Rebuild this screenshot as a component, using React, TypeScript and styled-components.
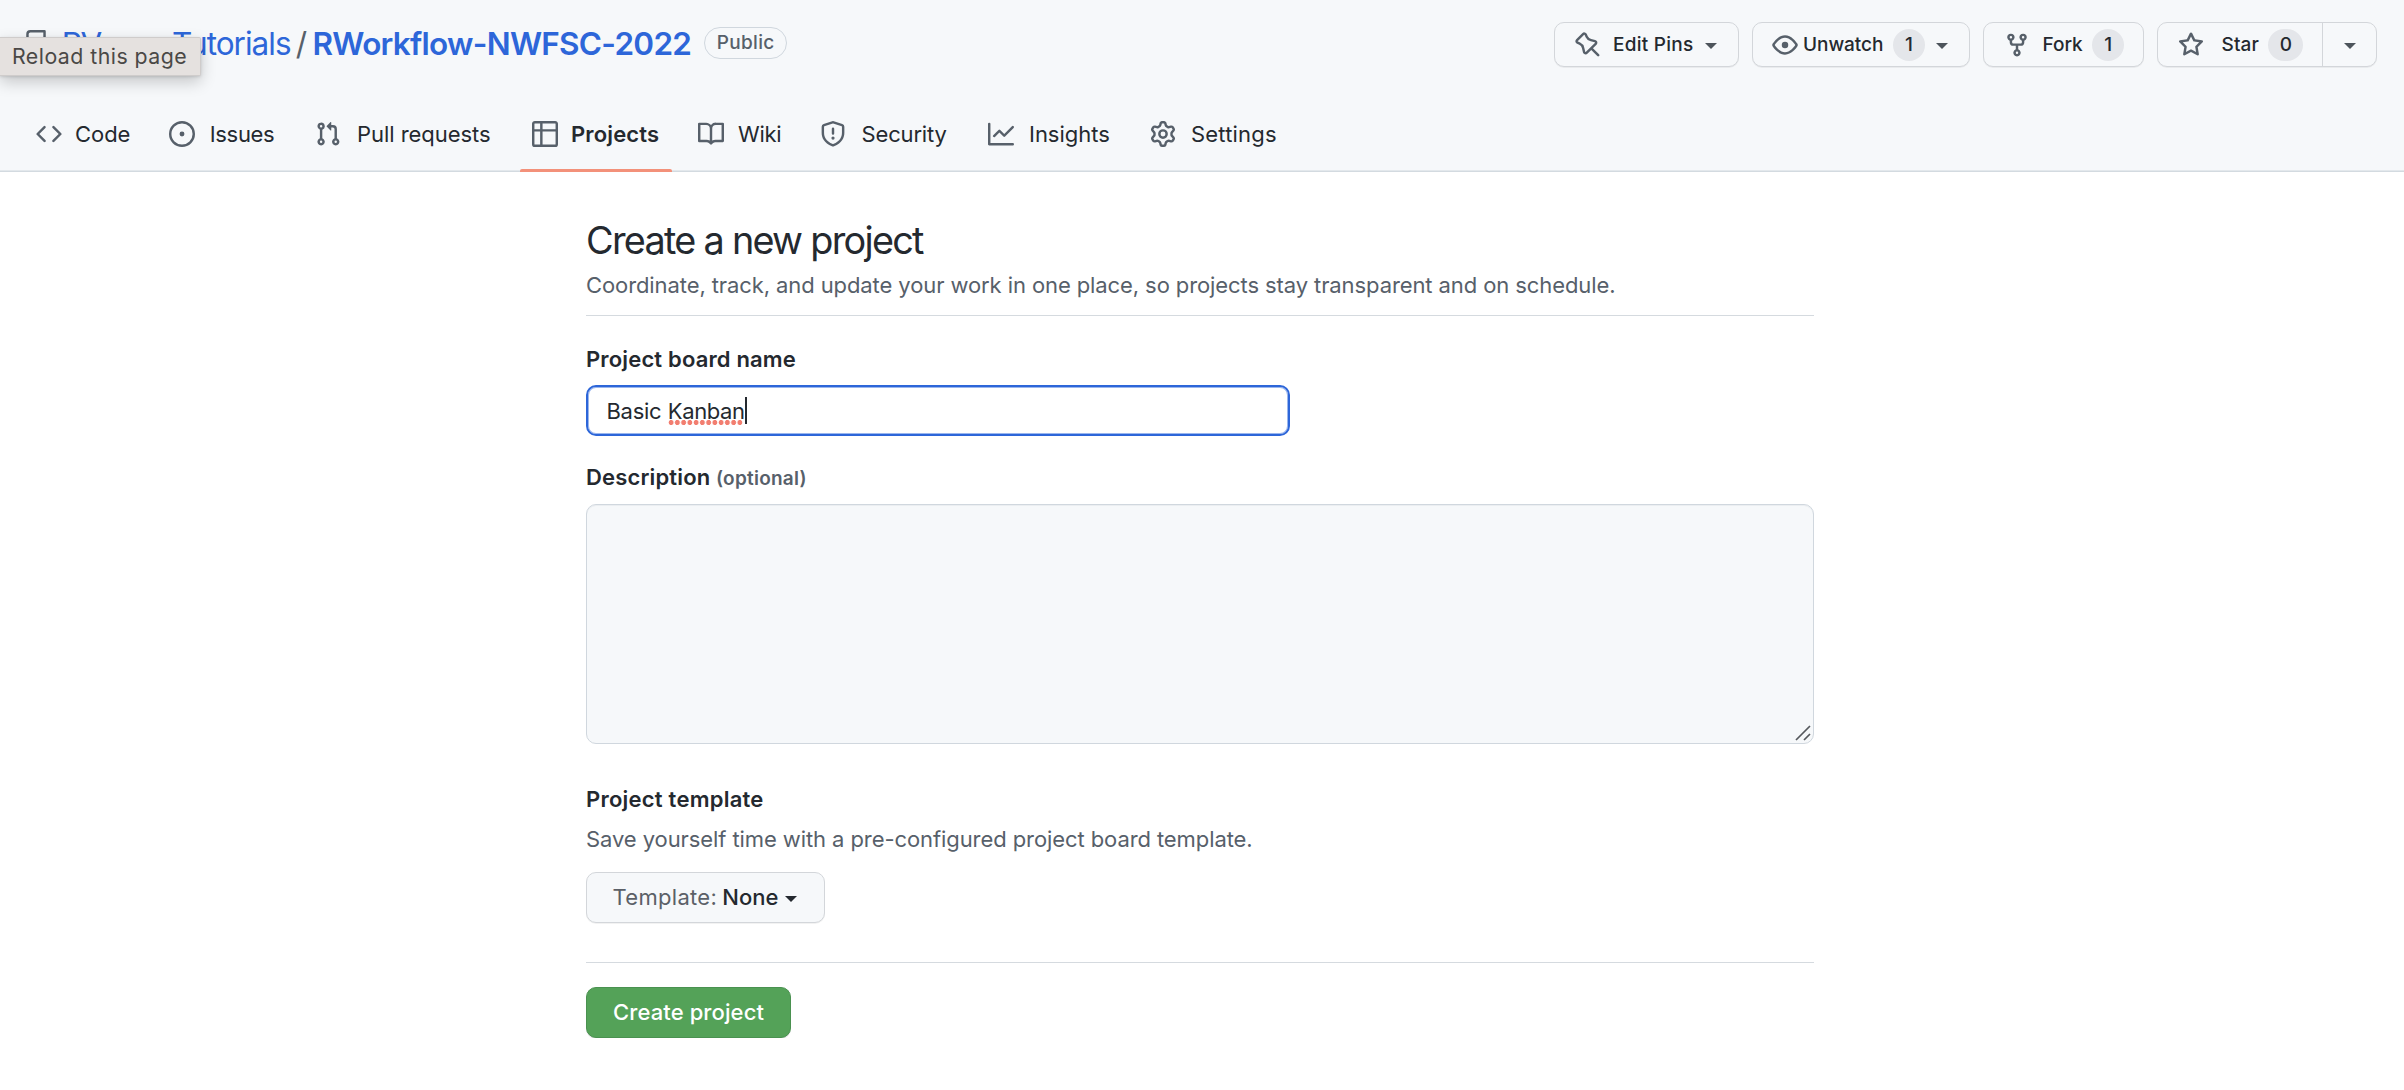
import React from "react";
import styled, { createGlobalStyle, css } from "styled-components";

const color = {
  ink: "#24292f",
  muted: "#57606a",
  link: "#2d66d9",
  canvas: "#f6f8fa",
  border: "#d0d7de",
  green: "#54a258",
};

const paths = {
  repo: "M2 2.5A2.5 2.5 0 014.5 0h8.75a.75.75 0 01.75.75v12.5a.75.75 0 01-.75.75h-2.5a.75.75 0 110-1.5h1.75v-2h-8a1 1 0 00-.714 1.7.75.75 0 01-1.072 1.05A2.495 2.495 0 012 11.5v-9zm10.5-1V9h-8c-.356 0-.694.074-1 .208V2.5a1 1 0 011-1h8zM5 12.25v3.25a.25.25 0 00.4.2l1.45-1.087a.25.25 0 01.3 0L8.6 15.7a.25.25 0 00.4-.2v-3.25a.25.25 0 00-.25-.25h-3.5a.25.25 0 00-.25.25z",
  code: "M4.72 3.22a.75.75 0 011.06 1.06L2.06 8l3.72 3.72a.75.75 0 11-1.06 1.06L.47 8.53a.75.75 0 010-1.06l4.25-4.25zm6.56 0a.75.75 0 10-1.06 1.06L13.94 8l-3.72 3.72a.75.75 0 101.06 1.06l4.25-4.25a.75.75 0 000-1.06l-4.25-4.25z",
  issue: "M8 9.5a1.5 1.5 0 100-3 1.5 1.5 0 000 3zM8 0a8 8 0 100 16A8 8 0 008 0zM1.5 8a6.5 6.5 0 1113 0 6.5 6.5 0 01-13 0z",
  pull: "M7.177 3.073L9.573.677A.25.25 0 0110 .854v4.792a.25.25 0 01-.427.177L7.177 3.427a.25.25 0 010-.354zM3.75 2.5a.75.75 0 100 1.5.75.75 0 000-1.5zm-2.25.75a2.25 2.25 0 113 2.122v5.256a2.251 2.251 0 11-1.5 0V5.372A2.25 2.25 0 011.5 3.25zM11 2.5h-1V4h1a1 1 0 011 1v5.628a2.251 2.251 0 101.5 0V5A2.5 2.5 0 0011 2.5zm1 10.25a.75.75 0 111.5 0 .75.75 0 01-1.5 0zM3.75 12a.75.75 0 100 1.5.75.75 0 000-1.5z",
  table: "M0 1.75C0 .784.784 0 1.75 0h12.5C15.216 0 16 .784 16 1.75v12.5A1.75 1.75 0 0114.25 16H1.75A1.75 1.75 0 010 14.25V1.75zM1.5 6.5v7.75c0 .138.112.25.25.25H5v-8H1.5zM5 5V1.5H1.75a.25.25 0 00-.25.25V5H5zm1.5 1.5v8h7.75a.25.25 0 00.25-.25V6.5h-8zm8-1.5V1.75a.25.25 0 00-.25-.25H6.5V5h8z",
  book: "M0 1.75A.75.75 0 01.75 1h4.253c1.227 0 2.317.59 3 1.501A3.744 3.744 0 0111.006 1h4.245a.75.75 0 01.75.75v10.5a.75.75 0 01-.75.75h-4.507a2.25 2.25 0 00-1.591.659l-.622.621a.75.75 0 01-1.06 0l-.622-.621A2.25 2.25 0 005.258 13H.75a.75.75 0 01-.75-.75V1.75zm8.755 3a2.25 2.25 0 012.25-2.25H14.5v9h-3.757c-.71 0-1.4.201-1.992.572l.004-7.322zm-1.504 7.324l.004-5.073-.002-2.253A2.25 2.25 0 005.003 2.5H1.5v9h3.757a3.75 3.75 0 011.994.574z",
  shield: "M7.467.133a1.75 1.75 0 011.066 0l5.25 1.68A1.75 1.75 0 0115 3.48V7c0 1.566-.32 3.182-1.303 4.682-.983 1.498-2.585 2.813-5.032 3.855a1.7 1.7 0 01-1.33 0c-2.447-1.042-4.049-2.357-5.032-3.855C1.32 10.182 1 8.566 1 7V3.48a1.75 1.75 0 011.217-1.667l5.25-1.68zm.61 1.429a.25.25 0 00-.153 0l-5.25 1.68a.25.25 0 00-.174.238V7c0 1.358.275 2.666 1.057 3.86.784 1.194 2.121 2.34 4.366 3.297a.2.2 0 00.154 0c2.245-.956 3.582-2.104 4.366-3.298C13.225 9.666 13.5 8.36 13.5 7V3.48a.25.25 0 00-.174-.237l-5.25-1.68zM9 10.5a1 1 0 11-2 0 1 1 0 012 0zm-.25-5.75a.75.75 0 10-1.5 0v3a.75.75 0 001.5 0v-3z",
  graph: "M1.5 1.75a.75.75 0 00-1.5 0v12.5c0 .414.336.75.75.75h14.5a.75.75 0 000-1.5H1.5V1.75zm14.28 2.53a.75.75 0 00-1.06-1.06L10 7.94 7.53 5.47a.75.75 0 00-1.06 0L3.22 8.72a.75.75 0 001.06 1.06L7 7.06l2.47 2.47a.75.75 0 001.06 0l5.25-5.25z",
  gear: "M8 0a8.2 8.2 0 0 1 .701.031C9.444.095 9.99.645 10.16 1.29l.288 1.107c.018.066.079.158.212.224.231.114.454.243.668.386.123.082.233.09.299.071l1.103-.303c.644-.176 1.392.021 1.82.63.27.385.506.792.704 1.218.315.675.111 1.422-.364 1.891l-.814.806c-.049.048-.098.147-.088.294.016.257.016.515 0 .772-.01.147.038.246.088.294l.814.806c.475.469.679 1.216.364 1.891a7.977 7.977 0 0 1-.704 1.217c-.428.61-1.176.807-1.82.63l-1.102-.302c-.067-.019-.177-.011-.3.071a5.909 5.909 0 0 1-.668.386c-.133.066-.194.158-.211.224l-.29 1.106c-.168.646-.715 1.196-1.458 1.26a8.006 8.006 0 0 1-1.402 0c-.743-.064-1.289-.614-1.458-1.26l-.289-1.106c-.018-.066-.079-.158-.212-.224a5.738 5.738 0 0 1-.668-.386c-.123-.082-.233-.09-.299-.071l-1.103.303c-.644.176-1.392-.021-1.82-.63a8.12 8.12 0 0 1-.704-1.218c-.315-.675-.111-1.422.363-1.891l.815-.806c.05-.048.098-.147.088-.294a6.214 6.214 0 0 1 0-.772c.01-.147-.038-.246-.088-.294l-.815-.806C.635 6.045.431 5.298.746 4.623a7.92 7.92 0 0 1 .704-1.217c.428-.61 1.176-.807 1.82-.63l1.102.302c.067.019.177.011.3-.071.214-.143.437-.272.668-.386.133-.066.194-.158.211-.224l.29-1.106C6.009.645 6.556.095 7.299.03 7.53.01 7.764 0 8 0Zm-.571 1.525c-.036.003-.108.036-.137.146l-.289 1.105c-.147.561-.549.967-.998 1.189-.173.086-.34.183-.5.29-.417.278-.97.423-1.529.27l-1.103-.303c-.109-.03-.175.016-.195.045-.22.312-.412.644-.573.99-.014.031-.021.11.059.19l.815.806c.411.406.562.957.53 1.456a4.709 4.709 0 0 0 0 .582c.032.499-.119 1.05-.53 1.456l-.815.806c-.081.08-.073.159-.059.19.162.346.353.677.573.989.02.03.085.076.195.046l1.102-.303c.56-.153 1.113-.008 1.53.27.161.107.328.204.501.29.447.222.85.629.997 1.189l.289 1.105c.029.109.101.143.137.146a6.6 6.6 0 0 0 1.142 0c.036-.003.108-.036.137-.146l.289-1.105c.147-.561.549-.967.998-1.189.173-.086.34-.183.5-.29.417-.278.97-.423 1.529-.27l1.103.303c.109.029.175-.016.195-.045.22-.313.411-.644.573-.99.014-.031.021-.11-.059-.19l-.815-.806c-.411-.406-.562-.957-.53-1.456a4.709 4.709 0 0 0 0-.582c-.032-.499.119-1.05.53-1.456l.815-.806c.081-.08.073-.159.059-.19a6.464 6.464 0 0 0-.573-.989c-.02-.03-.085-.076-.195-.046l-1.102.303c-.56.153-1.113.008-1.53-.27a4.44 4.44 0 0 0-.501-.29c-.447-.222-.85-.629-.997-1.189l-.289-1.105c-.029-.11-.101-.143-.137-.146a6.6 6.6 0 0 0-1.142 0ZM11 8a3 3 0 1 1-6 0 3 3 0 0 1 6 0ZM9.5 8a1.5 1.5 0 1 0-3.001.001A1.5 1.5 0 0 0 9.5 8Z",
  pin: "M4.456.734a1.75 1.75 0 012.826.504l.613 1.327a3.081 3.081 0 002.084 1.707l2.454.584c1.332.317 1.8 1.972.832 2.94L11.06 10l3.72 3.72a.75.75 0 11-1.061 1.06L10 11.06l-2.204 2.205c-.968.968-2.623.5-2.94-.832l-.584-2.454a3.081 3.081 0 00-1.707-2.084l-1.327-.613a1.75 1.75 0 01-.504-2.826L4.456.734zM5.92 1.866a.25.25 0 00-.404-.072L1.794 5.516a.25.25 0 00.072.404l1.328.613A4.582 4.582 0 015.73 9.63l.584 2.454a.25.25 0 00.42.12l5.47-5.47a.25.25 0 00-.12-.42L9.63 5.73a4.581 4.581 0 01-3.098-2.537L5.92 1.866z",
  eye: "M1.679 7.932c.412-.621 1.242-1.75 2.366-2.717C5.175 4.242 6.527 3.5 8 3.5c1.473 0 2.824.742 3.955 1.715 1.124.967 1.954 2.096 2.366 2.717a.119.119 0 010 .136c-.412.621-1.242 1.75-2.366 2.717C10.825 11.758 9.473 12.5 8 12.5c-1.473 0-2.824-.742-3.955-1.715C2.92 9.818 2.09 8.69 1.679 8.068a.119.119 0 010-.136zM8 2c-1.981 0-3.67.992-4.933 2.078C1.797 5.169.88 6.423.43 7.1a1.619 1.619 0 000 1.798c.45.678 1.367 1.932 2.637 3.024C4.329 13.008 6.019 14 8 14c1.981 0 3.67-.992 4.933-2.078 1.27-1.091 2.187-2.345 2.637-3.023a1.619 1.619 0 000-1.798c-.45-.678-1.367-1.932-2.637-3.023C11.671 2.992 9.981 2 8 2zm0 8a2 2 0 100-4 2 2 0 000 4z",
  fork: "M5 3.25a.75.75 0 11-1.5 0 .75.75 0 011.5 0zm0 2.122a2.25 2.25 0 10-1.5 0v.878A2.25 2.25 0 005.75 8.5h1.5v2.128a2.251 2.251 0 101.5 0V8.5h1.5a2.25 2.25 0 002.25-2.25v-.878a2.25 2.25 0 10-1.5 0v.878a.75.75 0 01-.75.75h-4.5A.75.75 0 015 6.25v-.878zm3.75 7.378a.75.75 0 11-1.5 0 .75.75 0 011.5 0zm3-8.75a.75.75 0 100-1.5.75.75 0 000 1.5z",
  star: "M8 .25a.75.75 0 01.673.418l1.882 3.815 4.21.612a.75.75 0 01.416 1.279l-3.046 2.97.719 4.192a.75.75 0 01-1.088.791L8 12.347l-3.766 1.98a.75.75 0 01-1.088-.79l.72-4.194L.818 6.374a.75.75 0 01.416-1.28l4.21-.611L7.327.668A.75.75 0 018 .25zm0 2.445L6.615 5.5a.75.75 0 01-.564.41l-3.097.45 2.24 2.184a.75.75 0 01.216.664l-.528 3.084 2.769-1.456a.75.75 0 01.698 0l2.77 1.456-.53-3.084a.75.75 0 01.216-.664l2.24-2.183-3.096-.45a.75.75 0 01-.564-.41L8 2.694v.001z",
};

const GlobalStyle = createGlobalStyle`
  *, *::before, *::after { box-sizing: border-box; }
  body {
    margin: 0;
    background: #fff;
    color: ${color.ink};
    font-family: Inter, "Liberation Sans", sans-serif;
    font-size: 22px;
    line-height: 34px;
    overflow: hidden;
  }
`;

const Svg = styled.svg`
  width: 26px;
  height: 26px;
  flex: none;
  fill: ${color.muted};
`;

const Icon = ({ name }: { name: keyof typeof paths }) => (
  <Svg viewBox="0 0 16 16" aria-hidden="true">
    <path fillRule="evenodd" d={paths[name]} />
  </Svg>
);

const Tooltip = styled.div`
  position: absolute;
  left: 0;
  top: 37px;
  width: 201px;
  height: 39px;
  padding-left: 12px;
  background: #e5e1df;
  border: 1px solid #cfcccb;
  border-left: 0;
  border-radius: 0 2px 2px 0;
  box-shadow: 0 6px 16px rgba(0, 0, 0, 0.2), 0 1px 3px rgba(0, 0, 0, 0.12);
  color: #4a4846;
  font-size: 21.3px;
  line-height: 37px;
  letter-spacing: 0.477px;
  white-space: nowrap;
`;

const Header = styled.header`
  height: 172px;
  background: ${color.canvas};
  box-shadow: inset 0 -1px #d3dae0, inset 0 -2px #e3e8ec;
`;

const TopRow = styled.div`
  display: flex;
  justify-content: space-between;
  align-items: center;
  height: 89px;
  padding: 0 27px 0 23px;
`;

const RepoTitle = styled.div`
  display: flex;
  align-items: center;
  height: 40px;
  margin-bottom: 3px;
  font-size: 31.5px;
  line-height: 40px;
  white-space: nowrap;
`;

const Owner = styled.a`
  margin-left: 12.8px;
  padding-top: 2px;
  color: ${color.link};
  letter-spacing: -1px;
`;

const Slash = styled.span`
  width: 22px;
  padding-top: 2px;
  text-align: center;
  color: ${color.muted};
`;

const RepoName = styled.a`
  padding-top: 2px;
  color: ${color.link};
  font-weight: 600;
  letter-spacing: -0.73px;
`;

const Visibility = styled.span`
  display: flex;
  justify-content: center;
  align-items: center;
  width: 83px;
  height: 32px;
  margin-left: 13px;
  border: 1.5px solid ${color.border};
  border-radius: 16px;
  color: ${color.muted};
  font-size: 19px;
  font-weight: 500;
  letter-spacing: 0.312px;
  line-height: 28px;
`;

const Actions = styled.div`
  display: flex;
  gap: 13px;
`;

const buttonFrame = css`
  border: 1px solid #d3d6da;
  border-radius: 10px;
  box-shadow: 0 1px 0 rgba(27, 31, 36, 0.06);
`;

const ActionButton = styled.div<{ $width: number; $pad?: number }>`
  ${buttonFrame}
  display: flex;
  align-items: center;
  width: ${(p) => p.$width}px;
  height: 45px;
  padding-left: ${(p) => p.$pad ?? 20}px;
  background: ${color.canvas};
`;

const ActionLabel = styled.span<{ $gap: number; $spacing: number }>`
  margin-left: ${(p) => p.$gap}px;
  font-size: 19px;
  font-weight: 500;
  letter-spacing: ${(p) => p.$spacing}px;
  white-space: nowrap;
`;

const Counter = styled.span<{ $width?: number }>`
  width: ${(p) => p.$width ?? 32}px;
  height: 32px;
  margin-left: 9.5px;
  border-radius: 17px;
  background: #e4e6ea;
  font-size: 19px;
  font-weight: 500;
  line-height: 32px;
  text-align: center;
`;

const Caret = styled.span<{ $gap?: number; $dark?: boolean }>`
  width: 0;
  height: 0;
  margin-left: ${(p) => p.$gap ?? 0}px;
  margin-top: 3px;
  border: 6.5px solid transparent;
  border-top-color: ${(p) => (p.$dark ? color.ink : "#4d545b")};
  border-bottom: 0;
`;

const SplitCaret = styled.span`
  display: flex;
  justify-content: center;
  align-items: center;
  align-self: stretch;
  width: 54px;
  margin-left: auto;
  border-left: 1px solid #d3d6da;
`;

const Nav = styled.nav`
  display: flex;
  height: 76px;
  margin-top: 7px;
  padding-left: 23px;
`;

const NavItem = styled.a<{ $step: number; $active?: boolean; $spacing: number; $gap: number }>`
  position: relative;
  display: flex;
  align-items: center;
  gap: ${(p) => p.$gap}px;
  flex: none;
  width: ${(p) => p.$step}px;
  padding-left: 13px;
  font-weight: ${(p) => (p.$active ? 600 : 400)};
  letter-spacing: ${(p) => p.$spacing}px;
  white-space: nowrap;
  ${(p) =>
    p.$active &&
    css`
      &::after {
        content: "";
        position: absolute;
        left: 1px;
        bottom: 0;
        width: 152px;
        height: 3px;
        border-radius: 2px 2px 0 0;
        background: #f3917a;
      }
    `}
`;

const Form = styled.main`
  display: flex;
  flex-direction: column;
  align-items: flex-start;
  width: 1228px;
  margin-left: 586px;
  padding-top: 44px;
`;

const Title = styled.h1`
  margin: 0;
  font-size: 37.8px;
  font-weight: 400;
  line-height: 48px;
  letter-spacing: -1.72px;
  white-space: nowrap;
`;

const Hint = styled.p<{ $top: number; $spacing: number }>`
  margin: ${(p) => p.$top}px 0 0;
  color: ${color.muted};
  letter-spacing: ${(p) => p.$spacing}px;
  white-space: nowrap;
`;

const Rule = styled.hr<{ $top: number }>`
  width: 100%;
  height: 1px;
  margin: ${(p) => p.$top}px 0 0;
  border: 0;
  background: #d5dadf;
`;

const Label = styled.div<{ $top: number; $spacing: number }>`
  display: flex;
  align-items: baseline;
  height: 34px;
  margin-top: ${(p) => p.$top}px;
  font-weight: 600;
  letter-spacing: ${(p) => p.$spacing}px;
  white-space: nowrap;
`;

const Optional = styled.span`
  margin-left: 5.5px;
  color: ${color.muted};
  font-size: 19px;
  letter-spacing: 0.25px;
`;

const NameField = styled.div`
  display: flex;
  align-items: center;
  width: 704px;
  height: 51px;
  margin-top: 9px;
  padding-left: 18.5px;
  border: 2.5px solid ${color.link};
  box-shadow: inset 0 0 0 1px #9ab6ee;
  border-radius: 10px;
  background: #fff;
  letter-spacing: -0.3px;
  white-space: pre;
`;

const Misspelled = styled.span`
  position: relative;
  margin-left: 0.7px;
  letter-spacing: -0.4px;
  &::after {
    content: "";
    position: absolute;
    left: 0.5px;
    bottom: 3px;
    width: 75px;
    height: 5px;
    background: radial-gradient(circle at 3.1px 2.5px, #f27e70 2.2px, transparent 2.8px) 0 0 / 6.25px 5px;
  }
`;

const TextCursor = styled.span`
  width: 2px;
  height: 27px;
  background: ${color.ink};
`;

const Description = styled.div`
  display: flex;
  justify-content: flex-end;
  align-items: flex-end;
  width: 100%;
  height: 240px;
  margin-top: 10px;
  padding: 0 2px 2px 0;
  border: 1px solid ${color.border};
  border-radius: 10px;
  background: ${color.canvas};
  box-shadow: inset 0 1px 0 rgba(208, 215, 222, 0.3);
`;

const Grip = styled.svg`
  width: 16px;
  height: 16px;
  fill: none;
  stroke: #55585c;
  stroke-width: 1.7;
`;

const TemplateButton = styled.div`
  ${buttonFrame}
  display: flex;
  align-items: center;
  width: 239px;
  height: 51px;
  margin-top: 16px;
  padding: 0 0 1px 25.5px;
  background: ${color.canvas};
  white-space: nowrap;
`;

const TemplateKey = styled.span`
  color: #5b6067;
  letter-spacing: 0.307px;
`;

const TemplateValue = styled.span`
  margin-left: 5px;
  font-weight: 500;
  letter-spacing: 0.1px;
`;

const SubmitButton = styled.div`
  display: flex;
  justify-content: center;
  align-items: center;
  width: 205px;
  height: 51px;
  margin-top: 24px;
  padding-bottom: 1px;
  border: 1px solid #4a9150;
  border-radius: 10px;
  background: ${color.green};
  box-shadow: 0 1px 0 rgba(27, 31, 36, 0.1);
  color: #fff;
  font-weight: 500;
  letter-spacing: 0.11px;
  white-space: nowrap;
`;

const tabs: { label: string; icon: keyof typeof paths; step: number; gap: number; spacing: number; active?: boolean }[] = [
  { label: "Code", icon: "code", step: 133, gap: 13, spacing: -0.05 },
  { label: "Issues", icon: "issue", step: 146, gap: 14.8, spacing: -0.35 },
  { label: "Pull requests", icon: "pull", step: 217, gap: 16, spacing: -0.046 },
  { label: "Projects", icon: "table", step: 165.5, gap: 13, spacing: 0.143, active: true },
  { label: "Wiki", icon: "book", step: 122.5, gap: 14.5, spacing: -0.3 },
  { label: "Security", icon: "shield", step: 168, gap: 15.5, spacing: -0.157 },
  { label: "Insights", icon: "graph", step: 162, gap: 15, spacing: -0.02 },
  { label: "Settings", icon: "gear", step: 140, gap: 15, spacing: 0.198 },
];

export default function App() {
  return (
    <>
      <GlobalStyle />
      <Header>
        <TopRow>
          <RepoTitle>
            <Icon name="repo" />
            <Owner>RVerse-Tutorials</Owner>
            <Slash>/</Slash>
            <RepoName>RWorkflow-NWFSC-2022</RepoName>
            <Visibility>Public</Visibility>
          </RepoTitle>
          <Actions>
            <ActionButton $width={185}>
              <Icon name="pin" />
              <ActionLabel $gap={12} $spacing={0.259}>Edit Pins</ActionLabel>
              <Caret $gap={11.5} />
            </ActionButton>
            <ActionButton $width={218} $pad={19}>
              <Icon name="eye" />
              <ActionLabel $gap={5} $spacing={-0.044}>Unwatch</ActionLabel>
              <Counter>1</Counter>
              <Caret $gap={11.5} />
            </ActionButton>
            <ActionButton $width={161}>
              <Icon name="fork" />
              <ActionLabel $gap={12.5} $spacing={-0.044}>Fork</ActionLabel>
              <Counter>1</Counter>
            </ActionButton>
            <ActionButton $width={220}>
              <Icon name="star" />
              <ActionLabel $gap={17.5} $spacing={0.126}>Star</ActionLabel>
              <Counter $width={35}>0</Counter>
              <SplitCaret>
                <Caret />
              </SplitCaret>
            </ActionButton>
          </Actions>
        </TopRow>
        <Nav>
          {tabs.map((t) => (
            <NavItem key={t.label} $step={t.step} $gap={t.gap} $spacing={t.spacing} $active={t.active}>
              <Icon name={t.icon} />
              {t.label}
            </NavItem>
          ))}
        </Nav>
      </Header>
      <Form>
        <Title>Create a new project</Title>
        <Hint $top={3.5} $spacing={-0.095}>
          Coordinate, track, and update your work in one place, so projects stay transparent and on schedule.
        </Hint>
        <Rule $top={13.5} />
        <Label $top={26} $spacing={0.158}>Project board name</Label>
        <NameField>
          Basic <Misspelled>Kanban</Misspelled>
          <TextCursor />
        </NameField>
        <Label $top={24} $spacing={0.16}>
          Description <Optional>(optional)</Optional>
        </Label>
        <Description>
          <Grip viewBox="0 0 16 16">
            <path d="M1 15L15 1M9 15l6-6" />
          </Grip>
        </Description>
        <Label $top={38} $spacing={0.235}>Project template</Label>
        <Hint $top={6} $spacing={-0.085}>
          Save yourself time with a pre-configured project board template.
        </Hint>
        <TemplateButton>
          <TemplateKey>Template:</TemplateKey>
          <TemplateValue>None</TemplateValue>
          <Caret $gap={6} $dark />
        </TemplateButton>
        <Rule $top={39} />
        <SubmitButton>Create project</SubmitButton>
      </Form>
      <Tooltip>Reload this page</Tooltip>
    </>
  );
}
